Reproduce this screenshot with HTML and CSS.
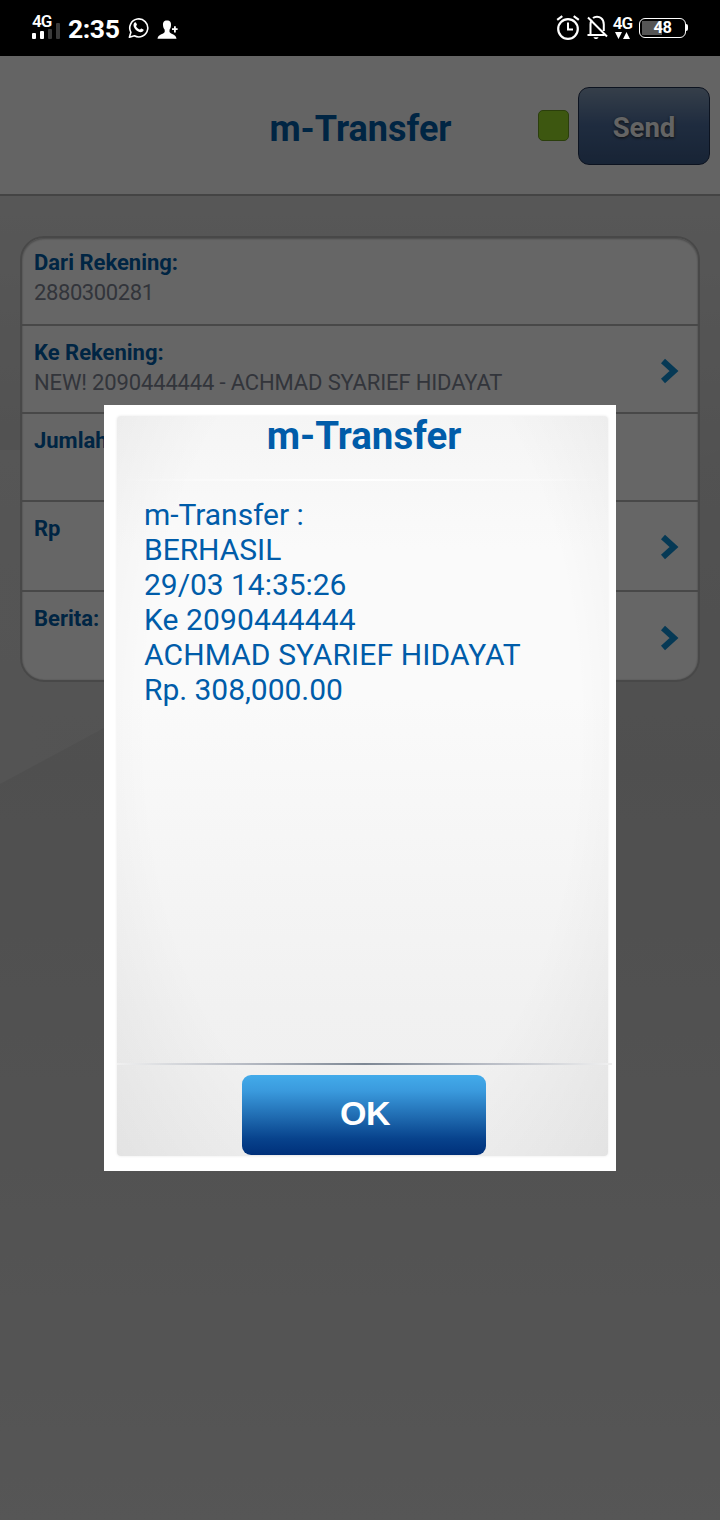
FILE: index.html
```html
<!DOCTYPE html>
<html lang="id">
<head>
<meta charset="utf-8">
<title>m-Transfer</title>
<link rel="stylesheet" href="styles.css">
</head>
<body>
<div class="screen">
  <div class="status">
    <div class="status-left">
      <div class="signal">
        <span class="net">4G</span>
        <svg width="28" height="16" viewBox="0 0 28 16"><g fill="#fff"><rect x="0" y="10" width="4" height="6" rx="1"/><rect x="8" y="8" width="4" height="8" rx="1"/></g><g fill="#3a3a3a"><rect x="16" y="6" width="4" height="10" rx="1"/><rect x="24" y="0" width="4" height="16" rx="1"/></g></svg>
      </div>
      <span class="clock">2:35</span>
      <svg class="wa" width="21" height="22" viewBox="0 0 21 22" fill="none" stroke="#fff"><path d="M1.4 20.2 2.9 15.3A9 9 0 1 1 6.4 18.8Z" stroke-width="1.6" stroke-linejoin="round"/><path d="M6 6.3C6.7 5 7.8 5 8.2 6l.7 1.6c.2.5-.7 1.2-.8 1.6.8 1.7 2 2.8 3.7 3.4.5-.1 1-1.3 1.6-1.1l2 1c.8.5-.2 2.2-1.7 2.6C9.900 15.800 5.200 11 5.500 7.700Z" fill="#fff" stroke="none"/></svg>
      <svg class="person" width="21" height="20" viewBox="0 0 21 20" fill="#fff"><path d="M10 0.500C6.800.500 5.900 2.500 6 5c.1 2.100.7 3.500 1.700 4.700v2.300C6.500 14.500 1 14 .5 18.800h19c-.5-4.800-5.500-4.300-7-6.800V9.700c1-1.200 1.400-2.600 1.500-4.700C14.200 2.500 13.200.500 10 .5Z"/><path d="M15 8.200h2v-2h1.800v2h1.800v1.900h-1.800v2.300H17v-2.300h-2Z"/></svg>
    </div>
    <div class="status-right">
      <svg class="alarm" width="24" height="25" viewBox="0 0 24 25" fill="none" stroke="#fff"><circle cx="12" cy="14" r="9.800" stroke-width="2.200"/><path d="M12 7.500v6.900h5" stroke-width="2"/><path d="M1.200 4.800 6.300 1.200M22.800 4.800 17.700 1.200" stroke-width="2.200"/></svg>
      <svg class="bell" width="22" height="25" viewBox="0 0 22 25" fill="none" stroke="#fff" stroke-width="2"><path d="M4.500 19.500V9.500C4.500 7.500 5 6 6 4.800M7 3C9 1.300 13 1.300 15 3c2 1.500 2.800 3.500 2.800 6.500v6.500M1.500 20h17M2 2.500 21 21.500"/><path d="M7.500 22.200h5c-.4 2.400-4.600 2.400-5 0Z" fill="#fff" stroke="none"/></svg>
      <div class="data">
        <span class="net">4G</span>
        <svg width="15" height="7" viewBox="0 0 15 7" fill="#fff"><path d="M0 0h7L3.500 7ZM8 7h7L11.500 0Z"/></svg>
      </div>
      <div class="battery"><span>48</span></div>
    </div>
  </div>

  <div class="app">
    <div class="header">
      <span class="title">m-Transfer</span>
      <div class="actions"><i class="light"></i><span class="send">Send</span></div>
    </div>
    <div class="content">
      <svg class="rays" width="720" height="1324" viewBox="0 0 720 1324"><defs><linearGradient id="ray" x1="0" x2="1" y1="0" y2="0"><stop offset="0" stop-color="#fff" stop-opacity=".2"/><stop offset="1" stop-color="#fff" stop-opacity=".04"/></linearGradient></defs><path d="M0 254H720L104 532 0 588Z" fill="url(#ray)"/></svg>
      <div class="card">
        <div class="row r1"><div><b>Dari Rekening:</b><p class="number">2880300281</p></div></div>
        <div class="row r2"><div><b>Ke Rekening:</b><p>NEW! 2090444444 - ACHMAD SYARIEF HIDAYAT</p></div>
          <svg class="chev" width="19" height="26" viewBox="0 0 19 26"><path d="M3 3 14 13 3 23" fill="none" stroke="#1090d4" stroke-width="6"/></svg></div>
        <div class="row r3"><div><b>Jumlah:</b></div></div>
        <div class="row r4"><div><b>Rp</b></div>
          <svg class="chev" width="19" height="26" viewBox="0 0 19 26"><path d="M3 3 14 13 3 23" fill="none" stroke="#1090d4" stroke-width="6"/></svg></div>
        <div class="row r5"><div><b>Berita:</b></div>
          <svg class="chev" width="19" height="26" viewBox="0 0 19 26"><path d="M3 3 14 13 3 23" fill="none" stroke="#1090d4" stroke-width="6"/></svg></div>
      </div>
    </div>
    <div class="scrim">
      <div class="dialog">
        <div class="panel">
          <div class="dialog-title">m-Transfer</div>
          <div class="rule-top"></div>
          <div class="message"><span>m-Transfer :<br>BERHASIL<br>29/03 14:35:26</span><br>Ke 2090444444<br>ACHMAD SYARIEF HIDAYAT<br><span>Rp. 308,000.00</span></div>
          <div class="rule-bottom"></div>
          <div class="ok">OK</div>
        </div>
      </div>
    </div>
  </div>
</div>
</body>
</html>
```
FILE: styles.css
```css
* { box-sizing: border-box; }
body { margin: 0; font-family: Roboto, sans-serif; background: #000; }
p { margin: 0; }
svg { display: block; flex: none; }
.screen { width: 720px; height: 1520px; overflow: hidden; display: flex; flex-direction: column; }

.status { height: 56px; background: #000; color: #fff; display: flex; justify-content: space-between; padding: 0 32px; }
.status-left, .status-right { display: flex; align-items: flex-start; }
.signal { width: 28px; padding-top: 14px; height: 39px; display: grid; }
.signal .net, .signal svg { grid-area: 1 / 1; }
.signal svg { align-self: end; }
.net { font-size: 17px; font-weight: 600; line-height: 15px; letter-spacing: -1px; }
.clock { font-size: 26.500px; font-weight: 700; line-height: 32px; margin: 13px 0 0 8px; width: 52px; white-space: nowrap; letter-spacing: -0.400px; }
.wa { margin: 17px 0 0 8px; }
.person { margin: 20px 0 0 8px; }
.alarm { margin-top: 15px; }
.bell { margin: 15px 0 0 6px; }
.data { display: flex; flex-direction: column; align-items: center; width: 19px; margin: 16px 0 0 5px; }
.data svg { margin-top: 1px; }
.battery { position: relative; width: 47px; height: 20px; margin: 18px 0 0 7px; border: 1.500px solid #fff; border-radius: 6px; display: flex; align-items: center; justify-content: center; font-size: 16.500px; font-weight: 700; background: linear-gradient(#555, #555) 2px 2px / 20px 14px no-repeat; }
.battery span { line-height: 16px; letter-spacing: -0.400px; }
.battery::after { content: ""; position: absolute; right: -3px; top: 5px; width: 2px; height: 7px; background: #fff; border-radius: 0 2px 2px 0; }
.status-right { margin-right: 2px; }

.app { position: relative; height: 1464px; display: flex; flex-direction: column; }
.header { height: 140px; background: #fafafa; border-bottom: 2px solid #aaa; display: grid; grid-template-columns: 1fr auto 1fr; align-items: center; padding: 2px 10px 0 11px; }
.title { grid-column: 2; color: #005ca9; font-size: 36px; font-weight: 700; line-height: 42px; padding-top: 6px; }
.actions { display: flex; justify-content: flex-end; align-items: center; gap: 9px; }
.light { width: 31px; height: 31px; margin-bottom: 2px; border-radius: 5px; border: 1px solid #6b9c20; background: #98da28; }
.send { width: 132px; height: 78px; border: 1px solid #203050; border-radius: 11px; background: linear-gradient(#869db8, #4e6e9e 48%, #3c5a86); color: #fafafa; font-size: 27.500px; font-weight: 700; line-height: 80px; text-align: center; text-shadow: 0 1px 3px #222; }

.content { position: relative; flex: 1; padding: 40px 20px 0; background: linear-gradient(#dadada, #cccccc 20%, #c6c6c6 43%, #cacaca 60%, #d6d6d6); }
.rays { position: absolute; left: 0; top: 0; }
.card { position: relative; width: 680px; height: 446px; border: 2px solid #b4b4b4; border-radius: 24px; background: #fff; box-shadow: inset 0 1px 2px #bbb, inset 0 0 2px #ccc; }
.row { display: flex; justify-content: space-between; padding: 10px 19px 0 12px; border-bottom: 2px solid #b4b4b4; font-size: 22px; line-height: 30px; color: #7e8494; }
.row b { color: #005ca9; font-weight: 700; }
.row p { letter-spacing: -0.150px; }
.row .number { letter-spacing: -0.400px; }
.r1, .r2, .r3 { height: 88px; }
.r4 { height: 90px; }
.r2 { padding-top: 12px; }
.r3, .r4 { padding-top: 12px; }
.r5 { height: 88px; border: 0; padding-top: 12px; }
.chev { margin-top: 20px; }
.r5 .chev { margin-top: 21px; }

.scrim { position: absolute; inset: 0; background: rgba(0, 0, 0, .6); padding: 349px 104px; }
.dialog { width: 512px; height: 766px; background: #fff; padding: 11px 8px 15px 13px; }
.panel { width: 491px; height: 740px; border-radius: 4px; display: flex; flex-direction: column; box-shadow: 0 0 3px #e8e8e8;
  background: radial-gradient(ellipse 300px 560px at 50% 42%, transparent 72%, rgba(0, 0, 0, .065) 125%), linear-gradient(#f5f5f5, #fafafa 18%, #fafafa 38%, #f1f1f1 80%, #efefef); }
.dialog-title { color: #005ca9; font-size: 38.500px; font-weight: 700; line-height: 39px; text-align: center; height: 63px; padding-left: 3px; }
.rule-top { height: 2px; background: linear-gradient(90deg, transparent, #fff, transparent); }
.message { height: 582px; padding: 16px 0 0 27px; color: #005ca9; font-size: 30px; line-height: 35px; letter-spacing: .1px; white-space: nowrap; }
.message span { letter-spacing: -0.040px; }
.rule-bottom { height: 2px; width: 495px; background: linear-gradient(90deg, #f0f0f0, #b8bcc5 25%, #7d8794 50%, #b8bcc5 75%, #f0f0f0); }
.ok { width: 244px; height: 80px; margin: 10px 0 0 125px; border-radius: 9px; background: linear-gradient(#43abea, #3a9add 20%, #1d67ad 55%, #07428c 80%, #00307a); color: #fff; font: 700 34px/76px "Liberation Sans", sans-serif; text-align: center; letter-spacing: -0.600px; padding-left: 2px; }
```
